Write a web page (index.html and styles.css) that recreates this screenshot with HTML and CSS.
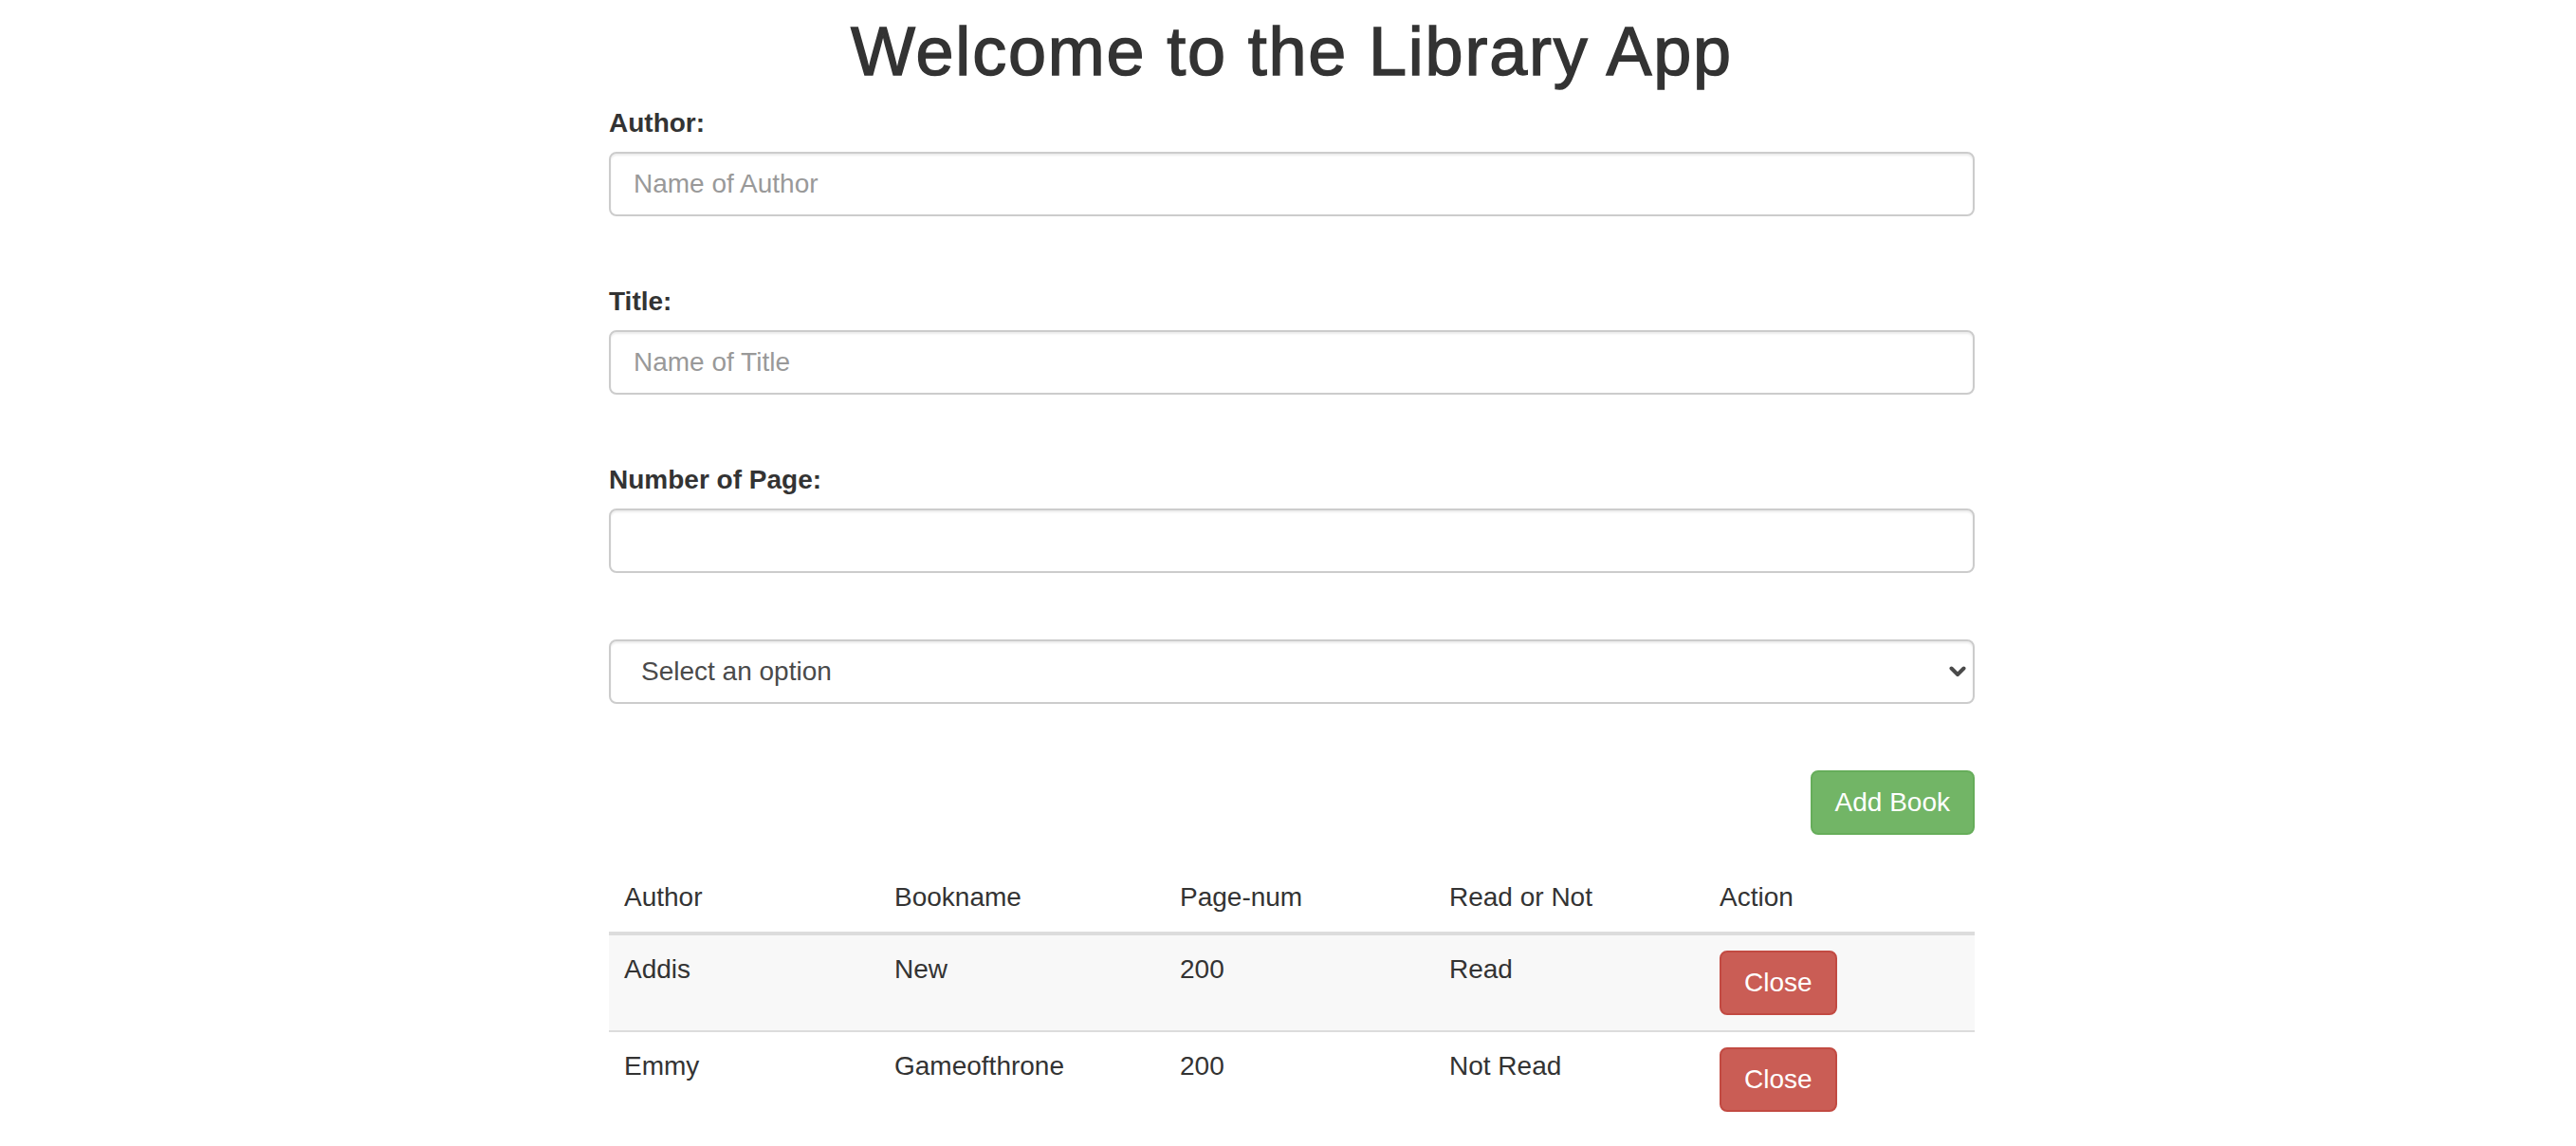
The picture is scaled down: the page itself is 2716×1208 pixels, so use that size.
FILE: index.html
```html
<!DOCTYPE html>
<html lang="en">
<head>
<meta charset="utf-8">
<title>Library App</title>
<link rel="stylesheet" href="styles.css">
</head>
<body>
<main class="page">
  <h1 class="title">Welcome to the Library App</h1>
  <form class="book-form">
    <div class="form-group">
      <label class="field-label" for="author">Author:</label>
      <input class="field-input" id="author" type="text" placeholder="Name of Author">
    </div>
    <div class="form-group">
      <label class="field-label" for="title">Title:</label>
      <input class="field-input" id="title" type="text" placeholder="Name of Title">
    </div>
    <div class="form-group">
      <label class="field-label" for="pages">Number of Page:</label>
      <input class="field-input" id="pages" type="number">
    </div>
    <div class="form-group select-wrap">
      <select class="field-select">
        <option>Select an option</option>
        <option>Read</option>
        <option>Not Read</option>
      </select>
      <svg class="chevron" width="18" height="12" viewBox="0 0 18 12" aria-hidden="true">
        <path d="M2.5 2.5 L9 9 L15.5 2.5" fill="none" stroke="#4a4a4a" stroke-width="4" stroke-linecap="round" stroke-linejoin="round"/>
      </svg>
    </div>
    <div class="form-actions">
      <button type="button" class="btn btn-success">Add Book</button>
    </div>
  </form>
  <table class="book-table">
    <colgroup>
      <col class="col-a"><col class="col-b"><col class="col-c"><col class="col-d"><col class="col-e">
    </colgroup>
    <thead>
      <tr><th>Author</th><th>Bookname</th><th>Page-num</th><th>Read or Not</th><th>Action</th></tr>
    </thead>
    <tbody>
      <tr class="striped"><td>Addis</td><td>New</td><td>200</td><td>Read</td><td><button type="button" class="btn btn-danger">Close</button></td></tr>
      <tr><td>Emmy</td><td>Gameofthrone</td><td>200</td><td>Not Read</td><td><button type="button" class="btn btn-danger">Close</button></td></tr>
    </tbody>
  </table>
</main>
</body>
</html>
```
FILE: styles.css
```css
html, body {
  margin: 0;
  padding: 0;
  background: #fff;
}
body {
  font-family: "Liberation Sans", Arial, Helvetica, sans-serif;
  font-size: 28px;
  line-height: 40px;
  color: #333;
}
.page {
  box-sizing: border-box;
  width: 1448px;
  margin: 0 auto;
  padding-left: 8px;
}
.title {
  margin: 14px 0 16px;
  font-size: 72px;
  line-height: 80px;
  font-weight: 500;
  text-align: center;
  color: #333;
  letter-spacing: 1.8px;
  -webkit-text-stroke: 1.4px #333;
}
.book-form {
  margin: 0;
}
.form-group {
  margin-bottom: 70px;
}
.field-label {
  display: block;
  font-weight: bold;
  line-height: 40px;
  margin-bottom: 10px;
}
.field-input,
.field-select {
  display: block;
  box-sizing: border-box;
  width: 100%;
  height: 68px;
  padding: 12px 24px;
  font-family: inherit;
  font-size: 28px;
  line-height: 40px;
  color: #555;
  background: #fff;
  border: 2px solid #ccc;
  border-radius: 8px;
  box-shadow: inset 0 2px 2px rgba(0, 0, 0, 0.075);
  outline: none;
}
.field-input::placeholder {
  color: #999;
}
.field-input::-webkit-outer-spin-button,
.field-input::-webkit-inner-spin-button {
  -webkit-appearance: none;
  margin: 0;
}
.select-wrap {
  position: relative;
}
.field-select {
  -webkit-appearance: none;
  appearance: none;
  padding-left: 32px;
  color: #4a4a4a;
}
.chevron {
  position: absolute;
  right: 9px;
  top: 28px;
  pointer-events: none;
}
.form-actions {
  display: flex;
  justify-content: flex-end;
  margin-bottom: 30px;
}
.btn {
  display: inline-block;
  box-sizing: border-box;
  padding: 12px 24px;
  font-family: inherit;
  font-size: 28px;
  line-height: 40px;
  color: #fff;
  border: 2px solid transparent;
  border-radius: 8px;
  cursor: pointer;
}
.btn-success {
  background: #72b566;
  border-color: #66ad5a;
}
.btn-danger {
  background: #ca5d55;
  border-color: #c24a42;
}
.book-table {
  width: 100%;
  table-layout: fixed;
  border-collapse: separate;
  border-spacing: 0;
}
.col-a { width: 285px; }
.col-b { width: 301px; }
.col-c { width: 284px; }
.col-d { width: 285px; }
.col-e { width: 285px; }
.book-table th,
.book-table td {
  padding: 16px;
  text-align: left;
  vertical-align: top;
  line-height: 40px;
  font-weight: normal;
}
.book-table th {
  border-bottom: 4px solid #dcdcdc;
}
.book-table tbody tr + tr td {
  border-top: 2px solid #dcdcdc;
}
.book-table .striped td {
  background: #f8f8f8;
}
```
